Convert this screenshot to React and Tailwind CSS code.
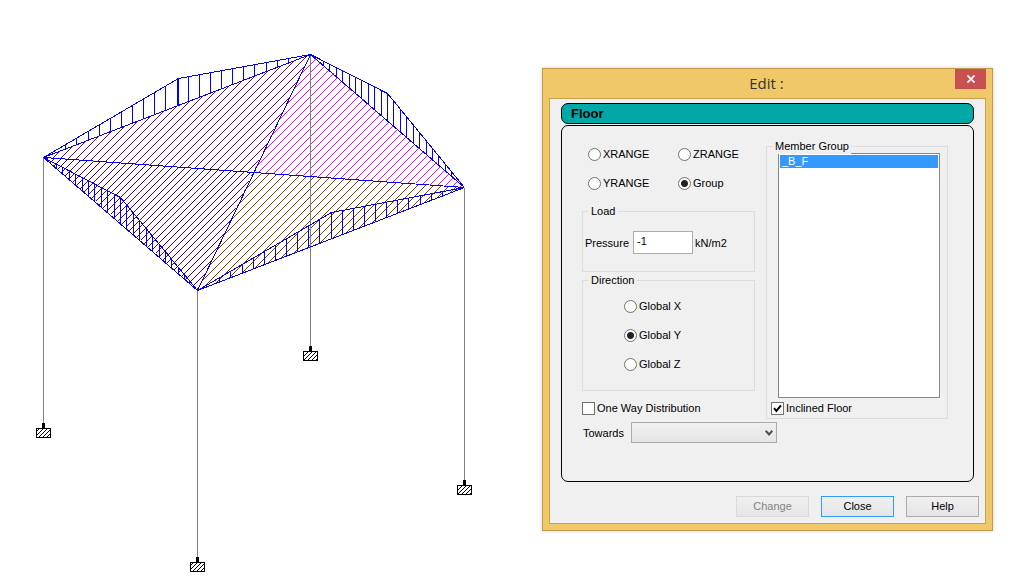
import React, { useState } from 'react';

const nodes = {
    a: [43, 157],
    b: [310, 54],
    c: [464, 187],
    d: [197, 290],
};
const center = [252, 172];

// Tributary areas of the floor, each with its own hatch
const areas = [
    { points: [nodes.a, nodes.b, center], color: '#800080', step: 8, start: 210 },
    { points: [nodes.b, nodes.c, center], color: '#ff00ff', step: 8, start: 366 },
    { points: [nodes.a, center, nodes.d], color: '#4b0090', step: 7, start: 205 },
    { points: [nodes.d, center, nodes.c], color: '#804000', step: 8, start: 426 },
];

// Distributed member loads, with the peak at mid span
const loads = [
    { from: nodes.a, to: nodes.b, peak: [178, 78], thick: true },
    { from: nodes.b, to: nodes.c, peak: [387, 93] },
    { from: nodes.a, to: nodes.d, peak: [120, 197] },
    { from: nodes.d, to: nodes.c, peak: [331, 212], thick: true },
];

const columns = [
    { top: nodes.a, base: 428 },
    { top: nodes.b, base: 351 },
    { top: nodes.c, base: 485 },
    { top: nodes.d, base: 562 },
];

// Cut the 45 degree lines x + y = k with a polygon
function hatch({ points, step, start }) {
    const sums = points.map(([x, y]) => x + y);
    const max = Math.max(...sums);
    const min = Math.min(...sums);
    const segments = [];
    for (let k = start; k < max; k += step) {
        if (k <= min) continue;
        const hits = [];
        points.forEach((p, i) => {
            const q = points[(i + 1) % points.length];
            const s = p[0] + p[1];
            const t = q[0] + q[1];
            if ((s < k) !== (t < k)) {
                const f = (k - s) / (t - s);
                hits.push(p[0] + (q[0] - p[0]) * f);
            }
        });
        if (hits.length === 2) {
            const x1 = Math.round(hits[0]);
            const x2 = Math.round(hits[1]);
            segments.push(`M${x1} ${k - x1}L${x2} ${k - x2}`);
        }
    }
    return segments.join('');
}

function heightAt(p, q, x) {
    return p[1] + ((q[1] - p[1]) * (x - p[0])) / (q[0] - p[0]);
}

function ribs({ from, to, peak }) {
    let path = '';
    for (let i = 2; i < 23; i++) {
        const x = Math.round(from[0] + ((to[0] - from[0]) * i) / 24);
        const outer = x < peak[0] ? heightAt(from, peak, x) : heightAt(peak, to, x);
        path += `M${x} ${Math.round(outer)}V${Math.round(heightAt(from, to, x))}`;
    }
    return path;
}

function Support({ x, y }) {
    return (
        <g>
            <rect x={x - 1} y={y - 5} width="3" height="5" fill="#000" />
            <rect x={x - 7} y={y} width="15" height="10" fill="#000" />
            <rect x={x - 6} y={y + 1} width="13" height="8" fill="url(#ground)" />
        </g>
    );
}

function FrameView() {
    return (
        <svg viewBox="0 0 542 579" className="block w-full" shapeRendering="crispEdges" role="img" aria-label="Frame with floor load">
            <defs>
                <pattern id="ground" width="4" height="4" patternUnits="userSpaceOnUse">
                    <rect width="4" height="4" fill="#fff" />
                    <path d="M3 0h1v1h-1zM2 1h1v1h-1zM1 2h1v1h-1zM0 3h1v1h-1z" fill="#000" />
                </pattern>
            </defs>
            <g transform="translate(0.5 0.5)" fill="none" strokeWidth="1">
                {areas.map((area) => (
                    <path key={area.color} d={hatch(area)} stroke={area.color} />
                ))}
                {columns.map(({ top, base }) => (
                    <path key={base} d={`M${top[0]} ${top[1]}V${base - 5}`} stroke="#808080" />
                ))}
                <g stroke="#0000ff">
                    <path d={`M${nodes.a}L${nodes.c}M${nodes.b}L${nodes.d}`} />
                    {loads.map((load) => (
                        <g key={load.peak[0]}>
                            <path d={`M${load.from}L${load.to}M${load.from}L${load.peak}L${load.to}`} />
                            <path d={ribs(load)} />
                            {load.thick && (
                                <path d={`M${load.peak}V${Math.round(heightAt(load.from, load.to, load.peak[0]))}`} />
                            )}
                        </g>
                    ))}
                </g>
            </g>
            {columns.map(({ top, base }) => (
                <Support key={base} x={top[0]} y={base} />
            ))}
        </svg>
    );
}

function Radio({ name, label, value, onChange }) {
    return (
        <label className="flex items-center gap-[2px]">
            <input
                type="radio"
                name={name}
                checked={value === label}
                onChange={() => onChange(label)}
                className="size-[13px] shrink-0 appearance-none rounded-full border border-[#707070] bg-white checked:bg-[radial-gradient(circle,#222_3px,#fff_4px)]"
            />
            {label}
        </label>
    );
}

function Checkbox({ label, checked, onChange }) {
    return (
        <label className="relative flex items-center gap-[2px]">
            <input
                type="checkbox"
                checked={checked}
                onChange={(e) => onChange(e.target.checked)}
                className="size-[13px] shrink-0 appearance-none border border-[#707070] bg-white"
            />
            {checked && (
                <svg viewBox="0 0 13 13" className="pointer-events-none absolute left-0 size-[13px]">
                    <path d="M3 6.2 5.4 9 10 3.4" fill="none" stroke="#000" strokeWidth="2" />
                </svg>
            )}
            {label}
        </label>
    );
}

function DialogButton({ children, className, ...props }) {
    return (
        <button
            type="button"
            className={`h-[21px] w-[73px] border bg-linear-to-b from-[#f0f0f0] to-[#e5e5e5] leading-[19px] ${className}`}
            {...props}
        >
            {children}
        </button>
    );
}

function EditDialog() {
    const [range, setRange] = useState('Group');
    const [direction, setDirection] = useState('Global Y');
    const [pressure, setPressure] = useState('-1');
    const [oneWay, setOneWay] = useState(false);
    const [inclined, setInclined] = useState(true);
    const [groups, setGroups] = useState(['_B_F']);

    return (
        <section
            role="dialog"
            aria-labelledby="dialog-title"
            className="mt-[68px] mr-[37px] w-[451px] shrink-0 border border-[#c19a4b] bg-[#f0c869] px-[6px] pb-[6px] shadow-[0_0_4px_rgba(0,0,0,0.2)]"
        >
            <header className="grid h-[29px] grid-cols-[1fr_auto_1fr] items-start">
                <h1 id="dialog-title" className="col-start-2 pr-[2px] font-['Open_Sans',sans-serif] text-[15px] leading-[29px] text-[#333]">Edit :</h1>
                <button type="button" aria-label="Close" className="flex h-[20px] w-[31px] items-center justify-center justify-self-end bg-[#c75050]">
                    <svg viewBox="0 0 8 8" className="size-[8px]">
                        <path d="M0.5 0.5 7.5 7.5M7.5 0.5 0.5 7.5" stroke="#fff" strokeWidth="1.7" />
                    </svg>
                </button>
            </header>

            <form className="border border-[#c9a250] bg-[#f0f0f0] pt-[4px] pb-[6px]" onSubmit={(e) => e.preventDefault()}>
                <h2 className="mx-[11px] h-[21px] rounded-[7px] border border-black bg-[#00a8a8] pl-[9px] text-[13px] leading-[19px] font-bold">Floor</h2>

                <div className="mx-[11px] mt-px rounded-[7px] border border-black pt-[13px] pr-[25px] pb-[38px] pl-[20px]">
                    <div className="grid grid-cols-[173px_1fr] items-start gap-x-[11px]">
                        <div>
                            <div className="grid grid-cols-[90px_1fr] gap-y-[15px] pt-[8px] pb-[14px] pl-[6px]">
                                {['XRANGE', 'ZRANGE', 'YRANGE', 'Group'].map((label) => (
                                    <Radio key={label} name="range" label={label} value={range} onChange={setRange} />
                                ))}
                            </div>

                            <fieldset className="border border-[#dcdcdc] pt-[13px] pb-[17px] pl-[2px]">
                                <legend className="ml-[3px] px-[3px]">Load</legend>
                                <div className="flex items-center">
                                    <label htmlFor="pressure" className="w-[48px]">Pressure</label>
                                    <input
                                        id="pressure"
                                        value={pressure}
                                        onChange={(e) => setPressure(e.target.value)}
                                        className="h-[23px] w-[60px] border border-[#abadb3] bg-white pb-[4px] pl-[3px]"
                                    />
                                    <span className="pl-[2px]">kN/m2</span>
                                </div>
                            </fieldset>

                            <fieldset className="mt-px flex flex-col gap-[15px] border border-[#dcdcdc] pt-[12px] pb-[19px] pl-[41px]">
                                <legend className="ml-[-36px] px-[3px]">Direction</legend>
                                {['Global X', 'Global Y', 'Global Z'].map((label) => (
                                    <Radio key={label} name="direction" label={label} value={direction} onChange={setDirection} />
                                ))}
                            </fieldset>

                            <div className="mt-[10px]">
                                <Checkbox label="One Way Distribution" checked={oneWay} onChange={setOneWay} />
                            </div>
                        </div>

                        <fieldset className="-mt-px border border-[#dcdcdc] px-[4px] pb-[3px]">
                            <legend className="relative ml-[2px] bg-[#f0f0f0] px-[2px] leading-[16px]">Member Group</legend>
                            <select
                                multiple
                                aria-label="Member Group"
                                value={groups}
                                onChange={(e) => setGroups([...e.target.selectedOptions].map((o) => o.value))}
                                className="-mt-px mr-[3px] ml-[7px] block h-[245px] w-[162px] overflow-hidden border border-[#828790] bg-white p-px"
                            >
                                <option className="h-[13px] min-h-0 px-[2px] py-0 leading-[13px] checked:bg-[linear-gradient(#3399ff,#3399ff)] checked:text-white">_B_F</option>
                            </select>
                            <div className="mt-[3px]">
                                <Checkbox label="Inclined Floor" checked={inclined} onChange={setInclined} />
                            </div>
                        </fieldset>
                    </div>

                    <div className="mt-[3px] flex items-center pl-px">
                        <label htmlFor="towards" className="w-[48px]">Towards</label>
                        <div className="relative">
                            <select id="towards" className="block h-[21px] w-[146px] appearance-none border border-[#acacac] bg-linear-to-b from-[#f0f0f0] to-[#e5e5e5]" />
                            <svg viewBox="0 0 8 6" className="pointer-events-none absolute top-[8px] right-[4px] h-[6px] w-[8px]">
                                <path d="M0.7 0.8 4 4.4 7.3 0.8" fill="none" stroke="#505050" strokeWidth="2" />
                            </svg>
                        </div>
                    </div>
                </div>

                <footer className="mt-[14px] flex justify-end gap-[12px] pr-[6px]">
                    <DialogButton disabled className="border-[#d9d9d9] text-[#838383]">Change</DialogButton>
                    <DialogButton className="border-[#3399ff]">Close</DialogButton>
                    <DialogButton className="border-[#acacac]">Help</DialogButton>
                </footer>
            </form>
        </section>
    );
}

export default function App() {
    return (
        <main className="flex items-start bg-white font-['Liberation_Sans',Arial,sans-serif] text-[11px] leading-[14px] text-black">
            <div className="min-w-0 flex-1">
                <FrameView />
            </div>
            <EditDialog />
        </main>
    );
}
